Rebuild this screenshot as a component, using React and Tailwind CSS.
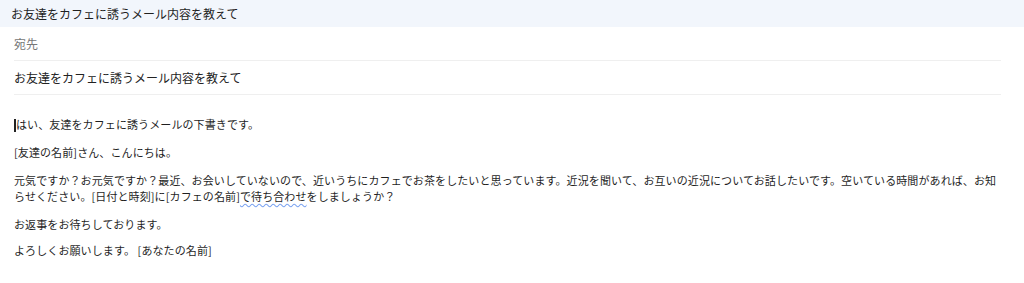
export default function App() {
  const font = { fontFamily: '"Noto Sans CJK JP", "Noto Sans", sans-serif' };
  return (
    <div className="w-[1024px] h-[283px] bg-white text-[#222]" style={font}>
      <div className="h-[27px] bg-[#f2f6fc] flex items-center px-[11px] text-[12px] text-[#1f1f1f]">
        お友達をカフェに誘うメール内容を教えて
      </div>
      <div className="px-[14px] mr-[9px]">
        <div className="h-[34px] flex items-center border-b border-[#efefef] text-[12px] text-[#777]">
          宛先
        </div>
        <div className="h-[34px] flex items-center border-b border-[#efefef] text-[12px] text-[#222]">
          お友達をカフェに誘うメール内容を教えて
        </div>
        <div className="pt-[21px] text-[11px] leading-[16px] text-[#1f1f1f] tracking-[0.1px]">
          <p className="mb-[12px]">
            <span className="inline-block w-[2px] h-[13px] bg-[#222] align-middle -mt-[2px]"></span>
            はい、友達をカフェに誘うメールの下書きです。
          </p>
          <p className="mb-[12px]">[友達の名前]さん、こんにちは。</p>
          <p className="mb-[12px]">
            元気ですか？お元気ですか？最近、お会いしていないので、近いうちにカフェでお茶をしたいと思っています。近況を聞いて、お互いの近況についてお話したいです。空いている時間があれば、お知らせください。[日付と時刻]に[カフェの名前]
            <span className="underline decoration-wavy decoration-[#7aa2f0] underline-offset-2">で待ち合わせ</span>
            をしましょうか？
          </p>
          <p className="mb-[10px]">お返事をお待ちしております。</p>
          <p>よろしくお願いします。 [あなたの名前]</p>
        </div>
      </div>
    </div>
  );
}
